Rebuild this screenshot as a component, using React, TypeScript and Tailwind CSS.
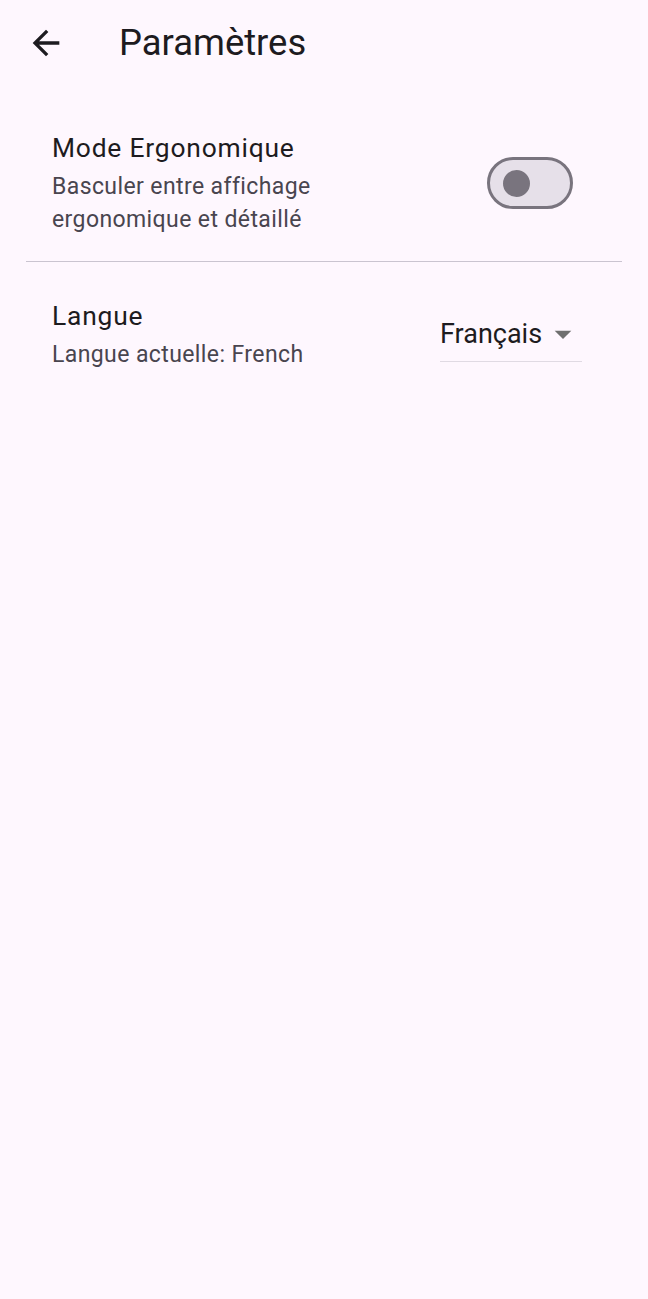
import { useState } from "react";

function BackIcon() {
  return (
    <svg viewBox="0 0 24 24" className="w-[40px] h-[40px]" fill="#1d1b20">
      <path d="M20 11H7.83l5.59-5.59L12 4l-8 8 8 8 1.41-1.41L7.83 13H20v-2z" />
    </svg>
  );
}

function DropArrow() {
  return (
    <svg viewBox="0 0 24 24" className="w-[40px] h-[40px]" fill="#6f6f6f">
      <path d="M7 10l5 5 5-5z" />
    </svg>
  );
}

function Switch({ on, onToggle }: { on: boolean; onToggle: () => void }) {
  return (
    <button
      onClick={onToggle}
      className="relative w-[86px] h-[52px] rounded-full border-[3px] border-[#79747e] bg-[#e6e0e9] flex items-center shrink-0"
    >
      <span
        className={
          on
            ? "ml-[42px] w-[36px] h-[36px] rounded-full bg-[#6750a4]"
            : "ml-[13px] w-[27px] h-[27px] rounded-full bg-[#79747e]"
        }
      />
    </button>
  );
}

export default function App() {
  const [ergo, setErgo] = useState(false);

  return (
    <div
      className="min-h-[1299px] w-full bg-[#fef7fe] text-[#1d1b20] pt-[21px]"
      style={{ fontFamily: "Roboto, 'Noto Sans', sans-serif" }}
    >
      {/* app bar */}
      <div className="flex items-center h-[44px] pl-[26px]">
        <BackIcon />
        <h1 className="ml-[53px] text-[36.4px] leading-[44px] font-normal">Paramètres</h1>
      </div>

      <div className="px-[26px]">
        {/* ergonomic mode */}
        <div className="mt-[65px] flex items-center justify-between pl-[26px] pr-[49px]">
          <div>
            <p className="text-[26.4px] leading-[36px] tracking-[0.8px]">Mode Ergonomique</p>
            <p className="mt-[4px] text-[23px] leading-[33px] tracking-[0.4px] text-[#49454f] w-[320px]">
              Basculer entre affichage ergonomique et détaillé
            </p>
          </div>
          <Switch on={ergo} onToggle={() => setErgo(!ergo)} />
        </div>

        <div className="mt-[25px] h-px bg-[#cac4d0]" />

        {/* language */}
        <div className="mt-[36px] flex items-center justify-between pl-[26px] pr-[40px]">
          <div>
            <p className="text-[26.4px] leading-[36px] tracking-[0.8px]">Langue</p>
            <p className="mt-[4px] text-[23px] leading-[33px] tracking-[0.4px] text-[#49454f]">
              Langue actuelle: French
            </p>
          </div>
          <div className="w-[142px] flex items-center justify-between border-b border-[#e0dae3] pb-[7px] mt-[6px]">
            <span className="text-[27px] leading-[40px]">Français</span>
            <span className="-mr-[1px]">
              <DropArrow />
            </span>
          </div>
        </div>
      </div>
    </div>
  );
}
